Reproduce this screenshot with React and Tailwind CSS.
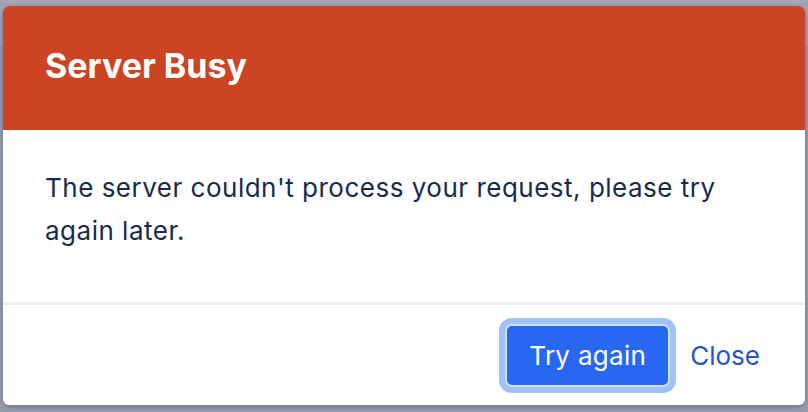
export default function App() {
  return (
    <div className="relative h-[412px] w-[808px] overflow-hidden bg-[#9aa0b1] font-['Inter','Liberation_Sans',sans-serif]">
      {/* page behind the overlay */}
      <div className="h-[48px] border-b border-[#8f96a8] bg-[#a1a7b7]" />

      <div className="absolute left-[3px] top-[6px] flex h-[399px] w-[802px] flex-col overflow-hidden rounded-[6px] bg-white shadow-[0_2px_6px_rgba(9,30,66,0.35)]">
        <div className="flex h-[124px] items-center bg-[#cc4424] px-[42px] pb-[6px]">
          <h1 className="text-[34px] font-bold text-white">Server Busy</h1>
        </div>

        <div className="h-[172px] px-[42px] pt-[36px]">
          <p className="max-w-[700px] text-[26px] leading-[43px] tracking-[0.5px] text-[#172b4d]">
            The server couldn't process your request, please try again later.
          </p>
        </div>

        <div className="h-[3px] bg-[#ebecf0]" />

        <div className="flex h-[100px] items-center justify-end gap-[22px] pr-[45px]">
          <button className="h-[59px] w-[161px] rounded-[5px] bg-[#2868f0] text-[26px] tracking-[0.3px] text-white ring-[6px] ring-[#a0c2f8] ring-offset-[2px] ring-offset-[#cfe0fb]">
            Try again
          </button>
          <button className="text-[26px] text-[#1f56c8]">Close</button>
        </div>
      </div>
    </div>
  );
}
